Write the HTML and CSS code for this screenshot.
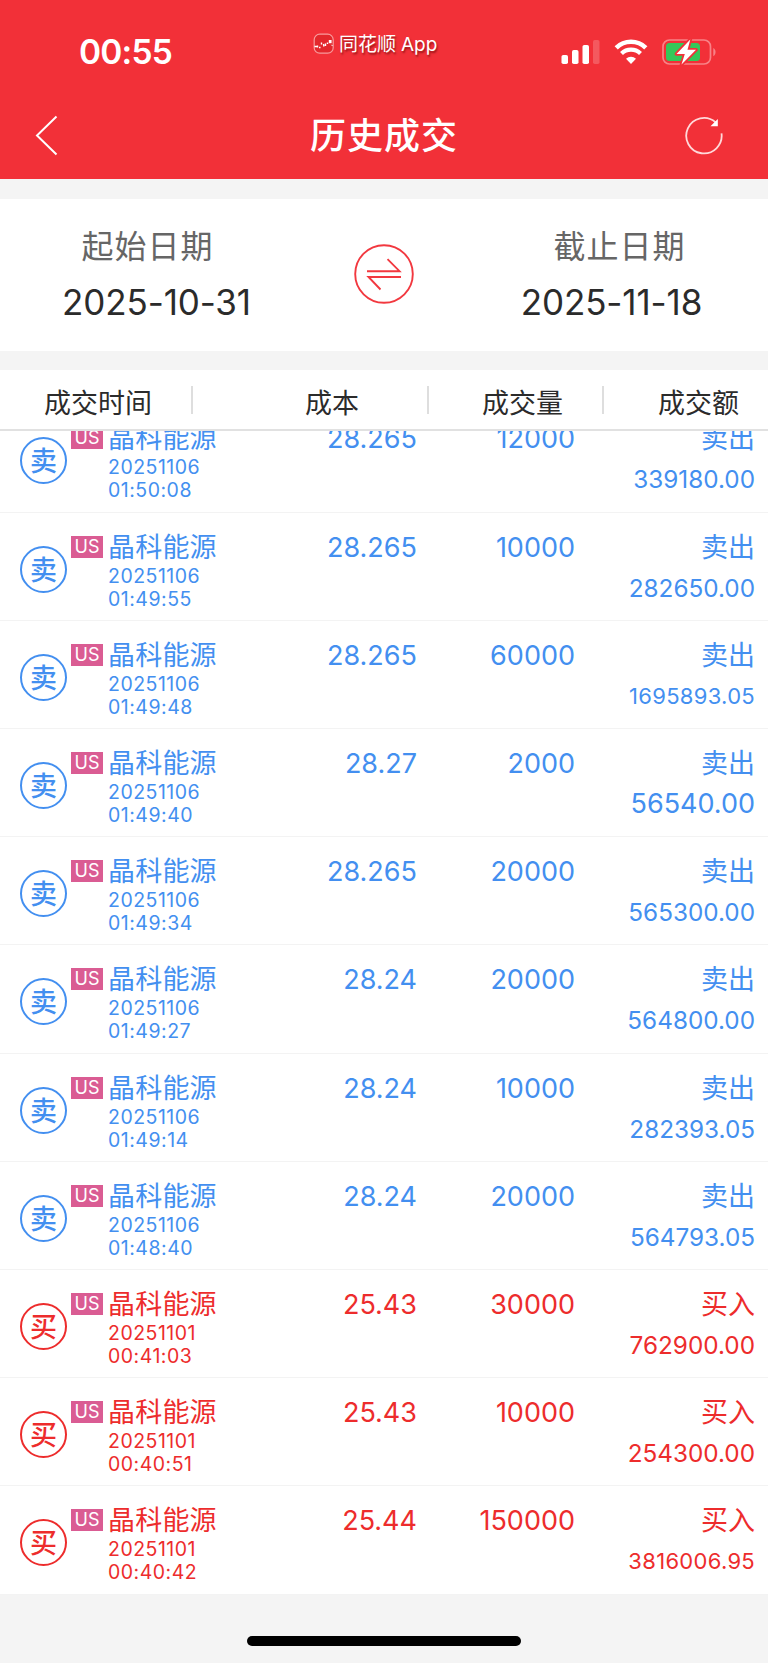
FILE: index.html
```
<!DOCTYPE html>
<html lang="zh-CN">
<head>
    <meta charset="UTF-8">
    <meta name="viewport" content="width=device-width, initial-scale=1.0">
    <title>历史成交</title>
    <link rel="stylesheet" href="styles.css">
</head>
<body>
    <header class="header">
        <div class="status-bar">
            <div class="status-time">00:55</div>
            <div class="status-app">
                <svg width="22" height="22" viewBox="0 0 22 22" fill="none">
                    <rect x="1.2" y="1.2" width="19" height="19" rx="5.5" fill="#e3272c" stroke="#f79a9c" stroke-width="1.2"/>
                    <path d="M1.5 13.5h2.5M4.5 12.5v2M6 14.5h1.500M8.500 9.500v2M10.500 11l.500 2.500M12.500 10.500v2.500M14.500 9.500v1.500" stroke="#fff" stroke-width="1.400"/>
                    <path d="M15.800 7h2.800v3.200h-2.800z" fill="#fff"/>
                    <path d="M18.500 11.800l1 1.200" stroke="#fff"/>
                </svg>
                <span>同花顺<em>App</em></span>
            </div>
            <div class="status-icons">
                <svg width="39" height="26" viewBox="0 0 39 26" fill="#fff">
                    <rect x="0.500" y="16" width="6.500" height="9" rx="1.800"/>
                    <rect x="11" y="11" width="6.500" height="14" rx="1.800"/>
                    <rect x="21.500" y="6" width="6.500" height="19" rx="1.800"/>
                    <rect x="32" y="1" width="6.500" height="24" rx="1.800" opacity="0.200"/>
                </svg>
                <svg width="34" height="26" viewBox="0 0 34 26" fill="none" stroke="#fff">
                    <path d="M2.200 8.800a21.300 21.300 0 0 1 29.600 0" stroke-width="4.600"/>
                    <path d="M7.500 14.500a13.700 13.700 0 0 1 19 0" stroke-width="4.200"/>
                    <path d="M17 25l-5-5.300a7.300 7.300 0 0 1 10 0z" fill="#fff" stroke="none"/>
                </svg>
                <svg width="55" height="28" viewBox="0 0 55 28" fill="none">
                    <rect x="1" y="2" width="47.500" height="24" rx="6.500" stroke="#f88287" stroke-width="1.700"/>
                    <path d="M51.300 10v8.200c3-1.400 3-6.800 0-8.200z" fill="#f88287"/>
                    <rect x="4" y="5" width="34" height="18" rx="3.500" fill="#34c759"/>
                    <path d="M28.300 1.500L14.500 16h8.300l-3.300 10.500L34 11.800h-8.500z" fill="#fff" stroke="#f23038" stroke-width="3.600" stroke-linejoin="round" paint-order="stroke"/>
                </svg>
            </div>
        </div>
        <nav class="nav">
            <svg class="nav-back" width="24" height="42" viewBox="0 0 24 42" fill="none" stroke="#fff" stroke-width="2">
                <path d="M21.500 1.500L2 20.500l19.500 19"/>
            </svg>
            <h1>历史成交</h1>
            <svg class="nav-refresh" width="40" height="40" viewBox="0 0 40 40" fill="none" stroke="#ffd9da" stroke-width="1.800">
                <path d="M37.500 17.300A17.700 17.700 0 1 1 31.500 6.300"/>
                <path d="M33.800 3v7.200h-7.300z" fill="#fff" stroke="none"/>
            </svg>
        </nav>
    </header>

    <section class="dates">
        <div class="date">
            <div class="date-label">起始日期</div>
            <div class="date-value">2025-10-31</div>
        </div>
        <svg class="swap" width="62" height="62" viewBox="0 0 62 62" fill="none" stroke="#f2383f" stroke-width="1.900">
            <circle cx="31" cy="31" r="28.800"/>
            <path d="M14 28.200h32.500L34.500 16.200M48 34H15.500L27.500 46.500"/>
        </svg>
        <div class="date date-end">
            <div class="date-label">截止日期</div>
            <div class="date-value">2025-11-18</div>
        </div>
    </section>

    <div class="table-head">
        <div>成交时间</div>
        <div>成本</div>
        <div>成交量</div>
        <div>成交额</div>
    </div>
    <main class="list" id="trade-list"></main>
    <div class="home-bar"></div>

    <script>
    var trades = [
        ['sell', '20251106', '01:50:08', '28.265', '12000', '339180.00'],
        ['sell', '20251106', '01:49:55', '28.265', '10000', '282650.00'],
        ['sell', '20251106', '01:49:48', '28.265', '60000', '1695893.05'],
        ['sell', '20251106', '01:49:40', '28.27', '2000', '56540.00'],
        ['sell', '20251106', '01:49:34', '28.265', '20000', '565300.00'],
        ['sell', '20251106', '01:49:27', '28.24', '20000', '564800.00'],
        ['sell', '20251106', '01:49:14', '28.24', '10000', '282393.05'],
        ['sell', '20251106', '01:48:40', '28.24', '20000', '564793.05'],
        ['buy', '20251101', '00:41:03', '25.43', '30000', '762900.00'],
        ['buy', '20251101', '00:40:51', '25.43', '10000', '254300.00'],
        ['buy', '20251101', '00:40:42', '25.44', '150000', '3816006.95']
    ];

    // Long amounts get a smaller font so they fit the column
    function amountSize(amount) {
        if (amount.length > 9) return 'small';
        return amount.length > 8 ? 'medium' : 'large';
    }

    document.getElementById('trade-list').innerHTML = trades.map(function(t) {
        var buy = t[0] === 'buy';
        return `<div class="row ${t[0]}">
            <div class="side">${buy ? '买' : '卖'}</div>
            <div class="market">US</div>
            <div class="stock">
                <div class="stock-name">晶科能源</div>
                <div class="stock-time">${t[1]}</div>
                <div class="stock-time">${t[2]}</div>
            </div>
            <div class="num cost">${t[3]}</div>
            <div class="num">${t[4]}</div>
            <div class="total">
                <div class="action">${buy ? '买入' : '卖出'}</div>
                <div class="amount ${amountSize(t[5])}">${t[5]}</div>
            </div>
        </div>`;
    }).join('');
    </script>
</body>
</html>
```
FILE: styles.css
```
* {
    box-sizing: border-box;
}

body {
    margin: 0;
    height: 1663px;
    display: flex;
    flex-direction: column;
    background: #f4f4f4;
    color: #2b2b2b;
    font-family: Inter, "Noto Sans CJK SC", sans-serif;
    overflow: hidden;
}

svg {
    display: block;
    flex: none;
}

/* Header */
.header {
    height: 179px;
    flex: none;
    background: #f23038;
    color: #fff;
}

.status-bar {
    height: 94px;
    display: grid;
    grid-template-columns: 313px 248px 1fr;
    padding-top: 31px;
}

.status-time {
    padding-left: 79px;
    font-size: 33.5px;
    font-weight: 600;
    line-height: 43px;
    letter-spacing: -0.8px;
}

.status-app {
    display: flex;
    gap: 4px;
    height: 26px;
    align-items: center;
    font-size: 19px;
    line-height: 26px;
    text-shadow: 1px 2px 2px rgba(90, 0, 0, 0.6);
}

.status-app span {
    padding-top: 1px;
}

.status-app em {
    font-style: normal;
    margin-left: 5px;
}

.status-icons {
    display: flex;
    align-items: center;
    height: 41px;
}

.status-icons svg + svg {
    margin-left: 14px;
}

.nav {
    display: flex;
    align-items: center;
    justify-content: space-between;
    height: 84px;
    padding: 0 44px 0 35px;
}

.nav h1 {
    margin: 0;
    padding-left: 25px;
    font-size: 36px;
    font-weight: 500;
    line-height: 52px;
    letter-spacing: 1px;
}

/* Date range */
.dates {
    height: 152px;
    flex: none;
    margin: 20px 0 19px;
    display: grid;
    grid-template-columns: 313px 142px 313px;
    align-items: start;
    justify-items: center;
    padding-top: 26px;
    background: #fff;
    text-align: center;
}

.date-label {
    padding-right: 18px;
    color: #666;
    font-size: 32px;
    line-height: 44px;
    letter-spacing: 1px;
}

.date-end .date-label {
    padding: 0 0 0 16px;
}

.date-value {
    margin-top: 11px;
    font-size: 35px;
    line-height: 44px;
    letter-spacing: -0.1px;
}

.swap {
    margin-top: 18px;
}

/* Table */
.table-head {
    height: 61px;
    flex: none;
    display: grid;
    grid-template-columns: 193px 236px 175px 164px;
    align-items: center;
    background: #fff;
    border-bottom: 2px solid #e1e1e1;
    font-size: 27px;
    line-height: 35px;
}

.table-head div {
    height: 28px;
    padding-left: 44px;
    border-right: 2px solid #dedede;
}

.table-head div:nth-child(2) {
    padding-left: 112px;
}

.table-head div:nth-child(3) {
    padding-left: 53px;
}

.table-head div:last-child {
    padding-left: 54px;
    border-right: 0;
}

/* Scrolled to the end, so the first row is partly hidden */
.list {
    height: 1163.5px;
    flex: none;
    display: flex;
    flex-direction: column;
    justify-content: flex-end;
    overflow: hidden;
}

.row {
    height: 108.2px;
    flex: none;
    display: grid;
    grid-template-columns: 51px 37px 151px 158px 158px 1fr;
    align-items: start;
    padding: 18px 13px 0 20px;
    background: #fff;
    border-bottom: 1px solid #f3f3f3;
    font-size: 27px;
    line-height: 34px;
}

.sell {
    color: #438ff0;
}

.buy {
    color: #ed2c2c;
}

.side {
    width: 47px;
    height: 47px;
    margin-top: 15px;
    border: 2px solid currentColor;
    border-radius: 50%;
    font-size: 27px;
    font-weight: 500;
    line-height: 46px;
    text-align: center;
}

.market {
    width: 32px;
    height: 22px;
    margin-top: 5px;
    background: #da5c93;
    color: #fff;
    font-size: 18px;
    line-height: 22px;
    text-align: center;
}

.stock-name {
    letter-spacing: 0.2px;
}

.stock-time {
    font-size: 19.5px;
    line-height: 23px;
    letter-spacing: 0.5px;
}

.num,
.total {
    text-align: right;
}

.amount {
    line-height: 46px;
}

.amount.medium {
    font-size: 24.3px;
}

.amount.small {
    font-size: 22px;
    letter-spacing: 0.3px;
}

.home-bar {
    width: 274px;
    height: 10px;
    margin: 41.5px auto 0;
    border-radius: 5px;
    background: #000;
}
```
